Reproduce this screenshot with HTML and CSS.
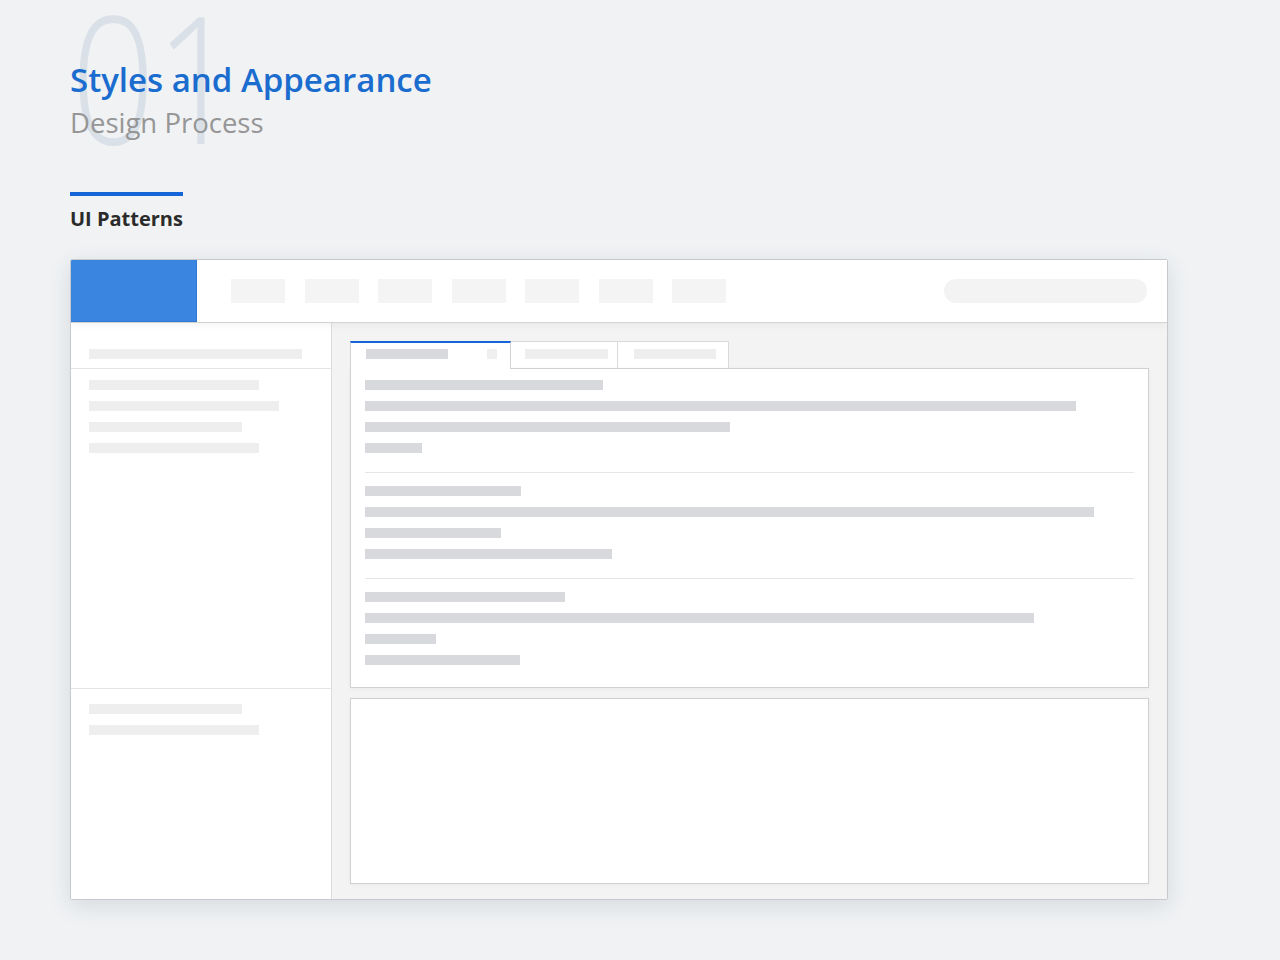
FILE: index.html
```html
<!DOCTYPE html>
<html lang="en">
<head>
<meta charset="utf-8">
<title>Styles and Appearance</title>
<link rel="stylesheet" href="styles.css">
</head>
<body>
<div class="page">
  <header class="hero">
    <div class="hero-num" aria-hidden="true">01</div>
    <h1 class="hero-title">Styles and Appearance</h1>
    <p class="hero-sub">Design Process</p>
  </header>

  <section class="section">
    <div class="section-rule"></div>
    <h2 class="section-title">UI Patterns</h2>
  </section>

  <div class="window">
    <div class="win-header">
      <div class="logo"></div>
      <nav class="nav">
        <span class="nav-item"></span>
        <span class="nav-item"></span>
        <span class="nav-item"></span>
        <span class="nav-item"></span>
        <span class="nav-item"></span>
        <span class="nav-item"></span>
        <span class="nav-item"></span>
      </nav>
      <div class="search"></div>
    </div>
    <div class="win-body">
      <aside class="sidebar">
        <div class="side-top">
          <span class="lbar" style="width:213px"></span>
        </div>
        <div class="side-mid">
          <span class="lbar" style="width:170px"></span>
          <span class="lbar" style="width:190px"></span>
          <span class="lbar" style="width:153px"></span>
          <span class="lbar" style="width:170px"></span>
        </div>
        <div class="side-bot">
          <span class="lbar" style="width:153px"></span>
          <span class="lbar" style="width:170px"></span>
        </div>
      </aside>
      <main class="main">
        <div class="tabs">
          <div class="tab tab-active">
            <span class="dbar" style="width:82px"></span>
            <span class="tab-x"></span>
          </div>
          <div class="tab tab-2">
            <span class="lbar" style="width:83px"></span>
          </div>
          <div class="tab tab-3">
            <span class="lbar" style="width:82px"></span>
          </div>
        </div>
        <div class="panel">
          <div class="group">
            <span class="dbar" style="width:238px"></span>
            <span class="dbar" style="width:711px"></span>
            <span class="dbar" style="width:365px"></span>
            <span class="dbar" style="width:57px"></span>
          </div>
          <div class="group">
            <span class="dbar" style="width:156px"></span>
            <span class="dbar" style="width:729px"></span>
            <span class="dbar" style="width:136px"></span>
            <span class="dbar" style="width:247px"></span>
          </div>
          <div class="group group-last">
            <span class="dbar" style="width:200px"></span>
            <span class="dbar" style="width:669px"></span>
            <span class="dbar" style="width:71px"></span>
            <span class="dbar" style="width:155px"></span>
          </div>
        </div>
        <div class="panel panel-empty"></div>
      </main>
    </div>
  </div>
</div>
</body>
</html>
```

FILE: styles.css
```css
* { box-sizing: border-box; }

html, body {
  margin: 0;
  padding: 0;
  background: #f0f2f4;
}

body {
  font-family: "Open Sans", "Noto Sans", "Liberation Sans", sans-serif;
  width: 1280px;
  height: 960px;
  overflow: hidden;
}

.page {
  padding: 60px 0 0 70px;
}

/* hero */
.hero {
  position: relative;
}

.hero-num {
  position: absolute;
  left: 1px;
  top: -74px;
  font-size: 178px;
  line-height: 178px;
  font-weight: 300;
  color: #d9e0e8;
  transform: scaleX(0.83);
  transform-origin: left top;
  white-space: nowrap;
}

.hero-title {
  position: relative;
  margin: 0;
  font-size: 33px;
  line-height: 40px;
  font-weight: 600;
  color: #1a6ccf;
}

.hero-sub {
  position: relative;
  margin: 5px 0 0;
  font-size: 27.5px;
  line-height: 36px;
  font-weight: 400;
  color: #969696;
}

/* section heading */
.section {
  margin-top: 51px;
}

.section-rule {
  width: 113px;
  height: 4px;
  background: #1565d8;
}

.section-title {
  margin: 11px 0 0;
  font-size: 20px;
  line-height: 24px;
  font-weight: 700;
  color: #2b2b2b;
}

/* window */
.window {
  margin-top: 28px;
  width: 1098px;
  height: 641px;
  border: 1px solid #c6cacf;
  border-radius: 2px;
  background: #fff;
  box-shadow: 0 6px 22px rgba(60, 80, 100, 0.14);
  display: flex;
  flex-direction: column;
  overflow: hidden;
}

.win-header {
  position: relative;
  z-index: 2;
  height: 63px;
  flex: 0 0 63px;
  display: flex;
  align-items: center;
  border-bottom: 1px solid #d3d3d3;
  background: #fff;
  box-shadow: 0 2px 8px rgba(0, 0, 0, 0.05);
}

.logo {
  align-self: stretch;
  width: 127px;
  margin-left: -1px;
  margin-top: -1px;
  background: #3985e0;
  border: 1px solid #2f78d6;
}

.nav {
  display: flex;
  gap: 19.5px;
  margin-left: 34px;
}

.nav-item {
  display: block;
  width: 54px;
  height: 24px;
  background: #f4f4f4;
}

.search {
  margin-left: auto;
  margin-right: 20px;
  width: 203px;
  height: 24px;
  border-radius: 12px;
  background: #f3f3f3;
}

.win-body {
  flex: 1;
  display: flex;
  min-height: 0;
}

/* sidebar */
.sidebar {
  width: 261px;
  flex: 0 0 261px;
  border-right: 1px solid #dcdcdc;
  display: flex;
  flex-direction: column;
  background: #fff;
}

.lbar, .dbar {
  display: block;
  height: 10px;
}

.lbar { background: #eeeeee; }
.dbar { background: #d8d9dd; }

.side-top {
  padding: 26px 18px 9px;
  border-bottom: 1px solid #e4e4e4;
}

.side-mid {
  height: 320px;
  padding: 11px 18px 0;
  display: flex;
  flex-direction: column;
  gap: 11px;
  border-bottom: 1px solid #e4e4e4;
}

.side-bot {
  flex: 1;
  padding: 15px 18px 0;
  display: flex;
  flex-direction: column;
  gap: 11px;
}

/* main */
.main {
  flex: 1;
  background: #f3f3f3;
  padding: 18px 18px 15px;
  display: flex;
  flex-direction: column;
}

.tabs {
  display: flex;
  height: 27px;
  flex: 0 0 27px;
  align-items: flex-start;
}

.tab {
  height: 27px;
  background: #fff;
  border: 1px solid #dadada;
  border-bottom: 0;
  padding-top: 7px;
  display: flex;
  align-items: flex-start;
}

.tab-active {
  position: relative;
  z-index: 1;
  width: 161px;
  height: 28px;
  border-top: 2px solid #1565d8;
  border-left-color: #d2d2d2;
  border-right-color: #d2d2d2;
  padding: 6px 13px 0 15px;
  justify-content: space-between;
}

.tab-x {
  display: block;
  width: 10px;
  height: 10px;
  background: #efefef;
}

.tab-2 {
  width: 107px;
  border-left: 0;
  padding-left: 14px;
}

.tab-3 {
  width: 111px;
  border-left: 0;
  padding-left: 16px;
}

.panel {
  background: #fff;
  border: 1px solid #d0d0d0;
  box-shadow: 0 1px 4px rgba(0, 0, 0, 0.04);
  padding: 0 14px;
}

.group {
  padding: 13px 0 19px;
  display: flex;
  flex-direction: column;
  gap: 11px;
  border-top: 1px solid #e6e6e6;
}

.group:first-child {
  padding-top: 11px;
  border-top: 0;
}

.group-last {
  padding-bottom: 22px;
}

.panel-empty {
  margin-top: 10px;
  flex: 1;
}
```
